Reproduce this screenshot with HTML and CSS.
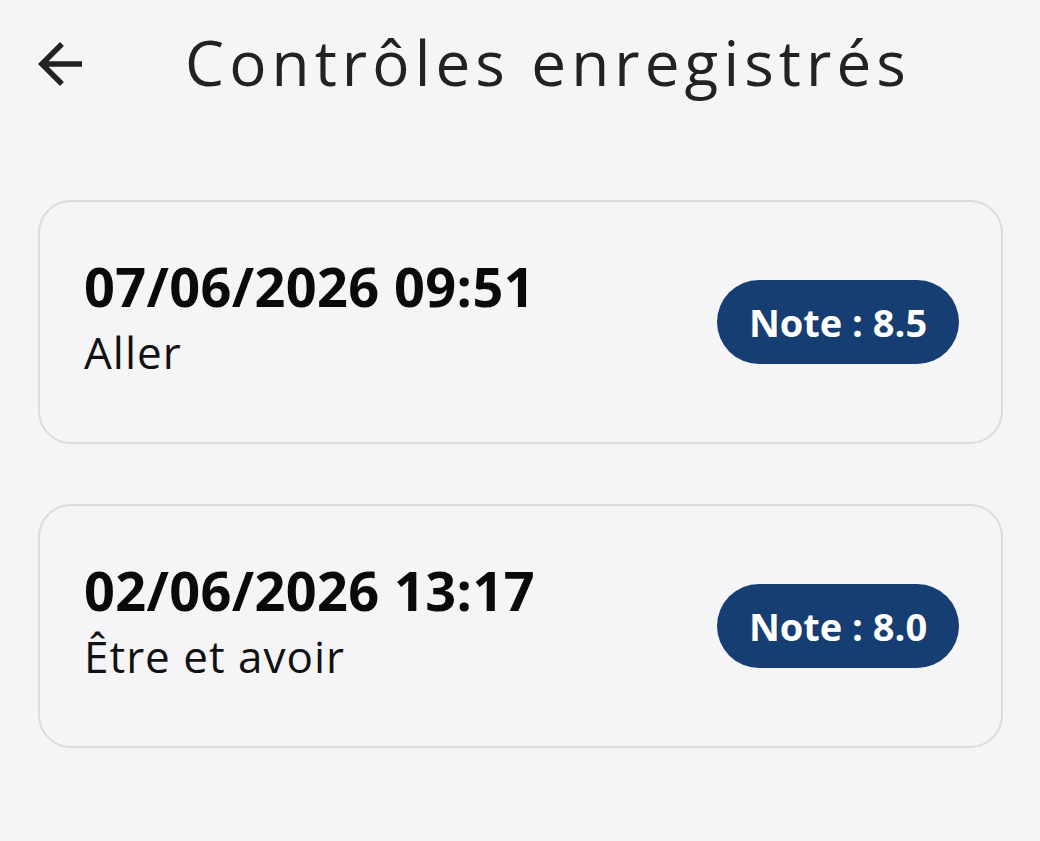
FILE: index.html
```html
<!DOCTYPE html>
<html lang="fr">
<head>
<meta charset="utf-8">
<title>Contrôles enregistrés</title>
<link rel="stylesheet" href="styles.css">
</head>
<body>
<header class="appbar">
  <button class="back" aria-label="Retour">
    <svg viewBox="0 0 24 24" width="66" height="66"><path d="M20 11H7.83l5.59-5.59L12 4l-8 8 8 8 1.41-1.41L7.83 13H20v-2z"/></svg>
  </button>
  <h1 class="title">Contrôles enregistrés</h1>
</header>
<main class="list">
  <div class="card">
    <div class="info">
      <div class="date">07/06/2026 09:51</div>
      <div class="name">Aller</div>
    </div>
    <div class="badge">Note : 8.5</div>
  </div>
  <div class="card">
    <div class="info">
      <div class="date">02/06/2026 13:17</div>
      <div class="name">Être et avoir</div>
    </div>
    <div class="badge">Note : 8.0</div>
  </div>
</main>
</body>
</html>
```

FILE: styles.css
```css
html, body {
  margin: 0;
  padding: 0;
  background: #f5f5f7;
  width: 1040px;
  height: 841px;
  overflow: hidden;
  font-family: "Open Sans", "Liberation Sans", sans-serif;
}

.appbar {
  display: flex;
  align-items: center;
  height: 128px;
  padding-left: 27px;
  box-sizing: border-box;
}

.back {
  width: 66px;
  height: 66px;
  padding: 0;
  border: 0;
  background: none;
  display: flex;
  fill: #222225;
}

.title {
  margin: 0 0 0 92px;
  padding-bottom: 5px;
  font-size: 62px;
  font-weight: 400;
  color: #222225;
  letter-spacing: 5.1px;
  line-height: 1;
}

.list {
  display: flex;
  flex-direction: column;
  gap: 60px;
  padding: 72px 37px 0 38px;
}

.card {
  height: 244px;
  box-sizing: border-box;
  border: 2.5px solid #dcdcdf;
  border-radius: 33px;
  display: flex;
  align-items: center;
  justify-content: space-between;
  padding: 0 42px 0 44px;
}

.info {
  display: flex;
  flex-direction: column;
}

.date {
  font-size: 54px;
  font-weight: 700;
  color: #0a0a0a;
  letter-spacing: 0.4px;
  line-height: 60px;
}

.name {
  font-size: 44px;
  font-weight: 400;
  color: #111;
  letter-spacing: 1px;
  line-height: 72px;
}

.badge {
  background: #163e72;
  color: #fff;
  font-weight: 700;
  font-size: 38px;
  height: 84px;
  width: 242px;
  border-radius: 42px;
  display: flex;
  align-items: center;
  justify-content: center;
  box-sizing: border-box;
}
```
